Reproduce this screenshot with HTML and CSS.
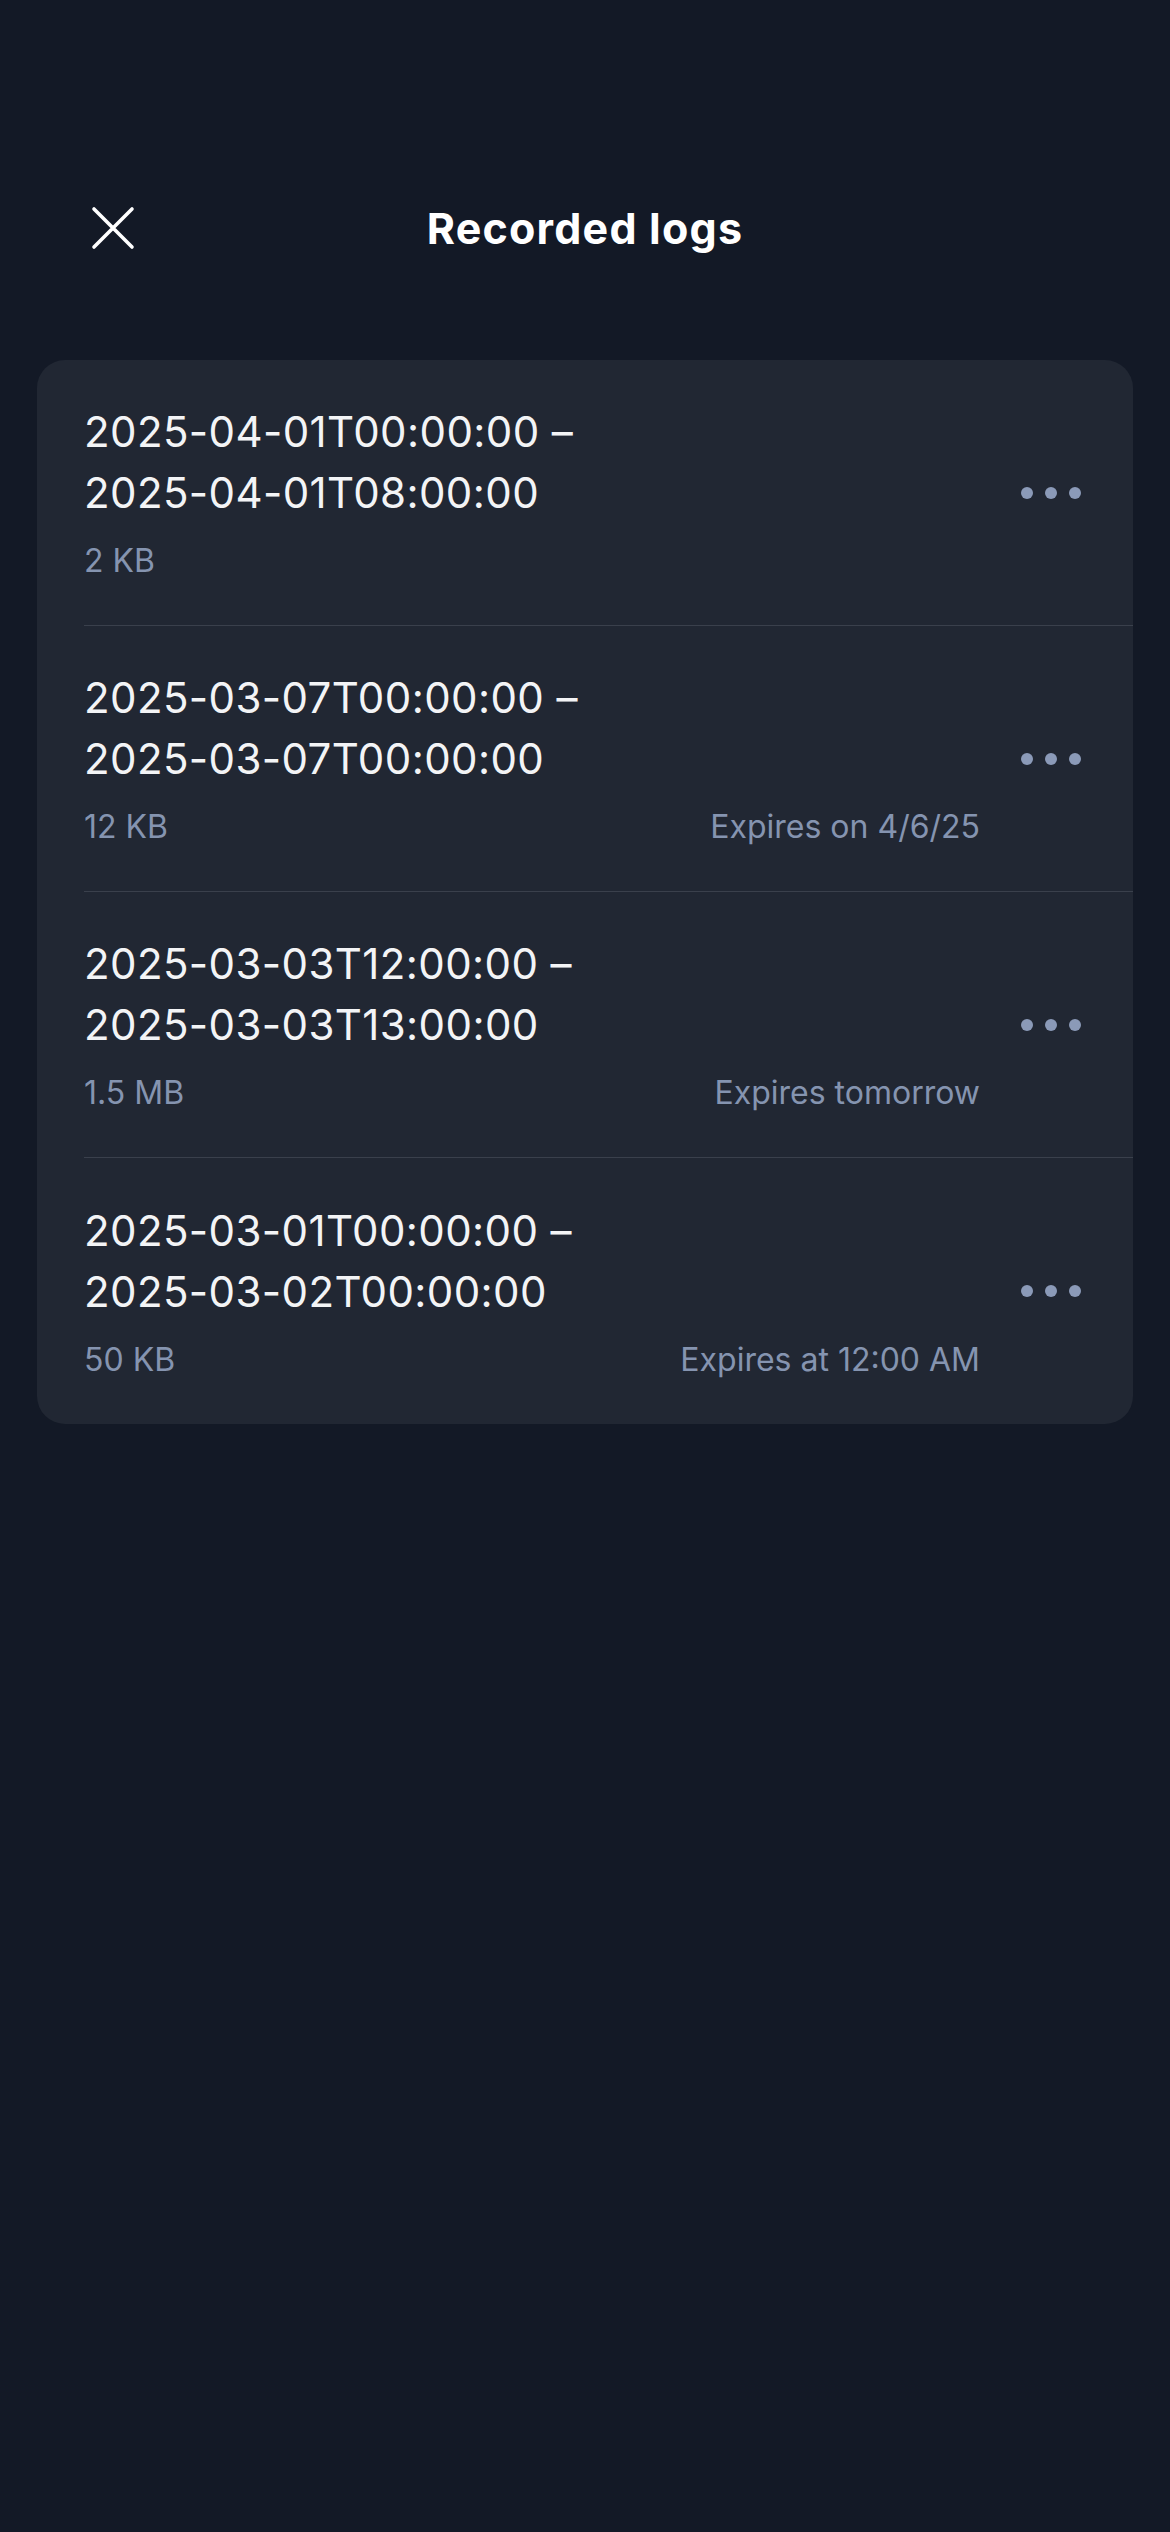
FILE: index.html
```html
<!DOCTYPE html>
<html lang="en">
<head>
<meta charset="utf-8">
<title>Recorded logs</title>
<link rel="stylesheet" href="styles.css">
</head>
<body>
<div class="screen">
  <header class="header">
    <button class="close" aria-label="Close">
      <svg viewBox="0 0 44 44" width="44" height="44"><path d="M3 3 L41 41 M41 3 L3 41" stroke="#ffffff" stroke-width="3.6" stroke-linecap="round" fill="none"/></svg>
    </button>
    <h1 class="title">Recorded logs</h1>
    <span class="spacer"></span>
  </header>

  <section class="card">
    <div class="row">
      <div class="info">
        <div class="range">2025-04-01T00:00:00 –<br>2025-04-01T08:00:00</div>
        <div class="meta"><span>2 KB</span><span></span></div>
      </div>
      <div class="more"><i></i><i></i><i></i></div>
    </div>
    <div class="row">
      <div class="info">
        <div class="range">2025-03-07T00:00:00 –<br>2025-03-07T00:00:00</div>
        <div class="meta"><span>12 KB</span><span>Expires on 4/6/25</span></div>
      </div>
      <div class="more"><i></i><i></i><i></i></div>
    </div>
    <div class="row">
      <div class="info">
        <div class="range">2025-03-03T12:00:00 –<br>2025-03-03T13:00:00</div>
        <div class="meta"><span>1.5 MB</span><span>Expires tomorrow</span></div>
      </div>
      <div class="more"><i></i><i></i><i></i></div>
    </div>
    <div class="row">
      <div class="info">
        <div class="range">2025-03-01T00:00:00 –<br>2025-03-02T00:00:00</div>
        <div class="meta"><span>50 KB</span><span>Expires at 12:00 AM</span></div>
      </div>
      <div class="more"><i></i><i></i><i></i></div>
    </div>
  </section>
</div>
</body>
</html>
```
FILE: styles.css
```css
* { box-sizing: border-box; }
html, body {
  margin: 0;
  padding: 0;
  background: #131926;
}
body {
  width: 1170px;
  height: 2532px;
  font-family: Inter, "Noto Sans", sans-serif;
  color: #f3f4f6;
}
.screen {
  padding-top: 180px;
}
.header {
  display: grid;
  grid-template-columns: 1fr auto 1fr;
  align-items: center;
  height: 96px;
  padding: 0 91px;
}
.close {
  width: 44px;
  height: 44px;
  padding: 0;
  border: 0;
  background: none;
  display: block;
}
.close svg { display: block; }
.title {
  margin: 0;
  font-size: 43px;
  line-height: 96px;
  font-weight: 700;
  color: #ffffff;
  letter-spacing: 1.2px;
}
.card {
  margin: 84px 37px 0;
  background: #212733;
  border-radius: 28px;
  overflow: hidden;
}
.row {
  margin-left: 47px;
  display: flex;
  align-items: center;
  border-bottom: 1px solid #3a404c;
}
.row:last-child { border-bottom: 0; height: 266px; }
.info {
  flex: 1;
  padding: 41px 0 44px;
}
.range {
  font-size: 42px;
  line-height: 61px;
  font-weight: 400;
  color: #f3f4f6;
  letter-spacing: 0.4px;
}
.meta {
  margin-top: 18px;
  display: flex;
  justify-content: space-between;
  font-size: 32px;
  line-height: 40px;
  color: #8594b0;
}
.more {
  display: flex;
  gap: 12px;
  margin: 0 52px 0 41px;
}
.more i {
  display: block;
  width: 12px;
  height: 12px;
  border-radius: 50%;
  background: #8b9ab8;
}
```
